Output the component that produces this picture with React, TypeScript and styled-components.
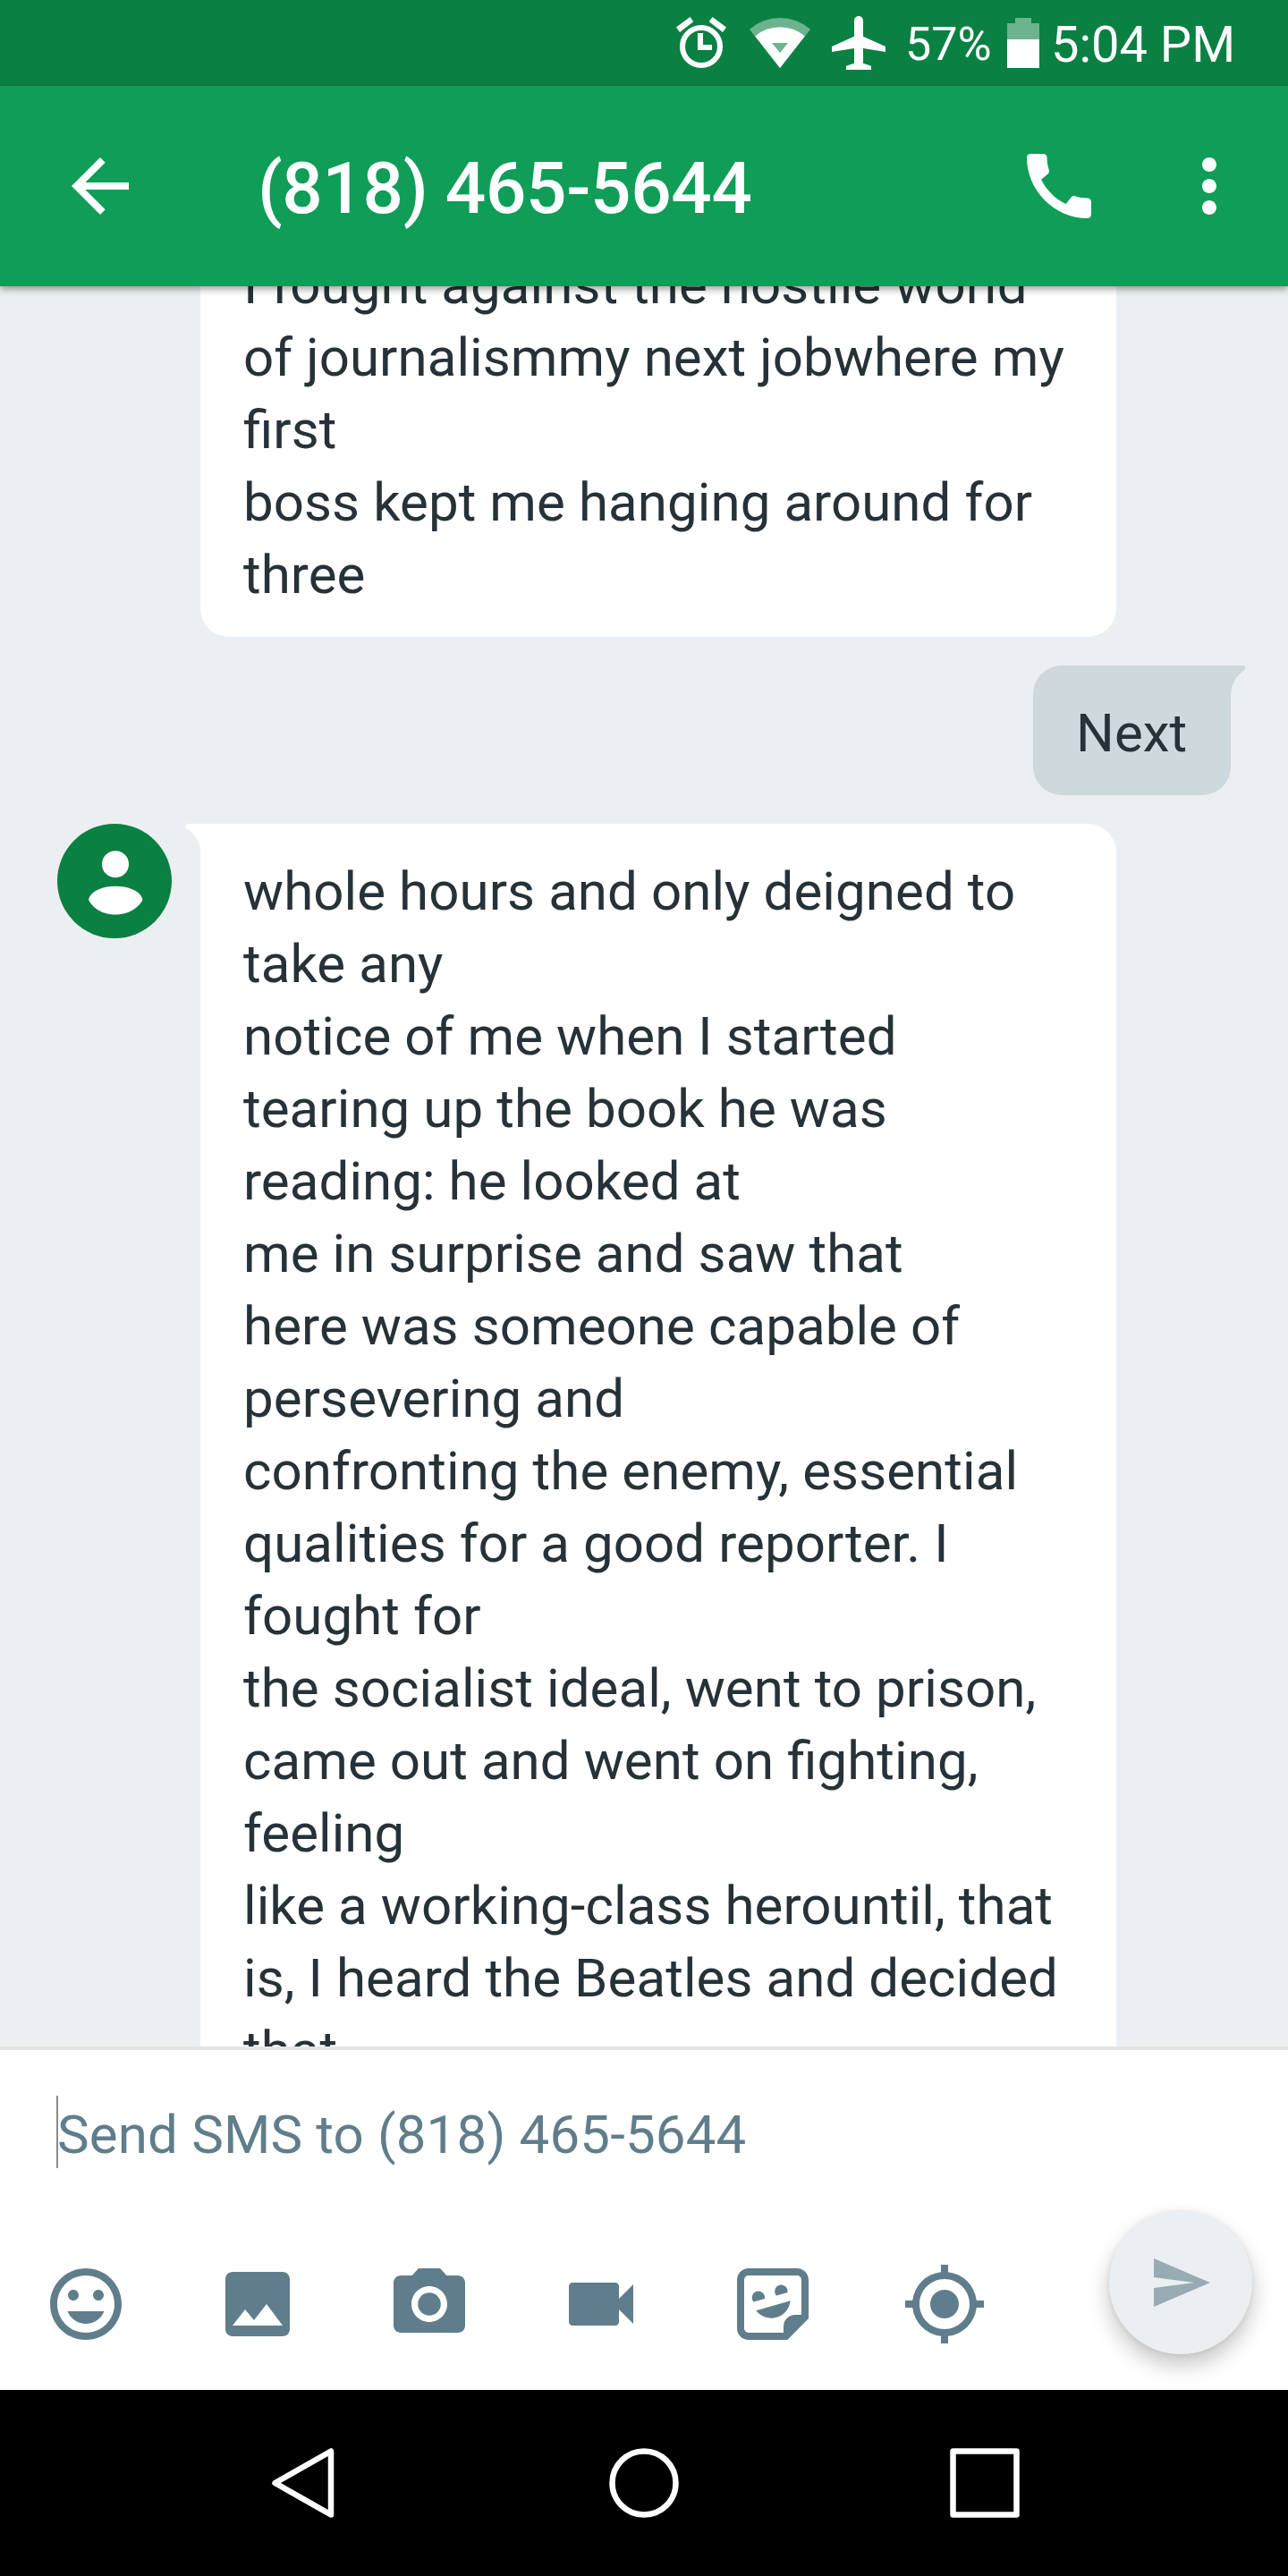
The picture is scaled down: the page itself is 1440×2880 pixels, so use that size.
import React from "react";
import styled, { createGlobalStyle, css } from 'styled-components';
import {
  MdArrowBack,
  MdCall,
  MdMoreVert,
  MdMood,
  MdImage,
  MdPhotoCamera,
  MdVideocam,
  MdGpsFixed,
  MdSend,
} from 'react-icons/md';

const GlobalStyle = createGlobalStyle`
  * {
    box-sizing: border-box;
  }
  body {
    margin: 0;
    background: #000;
    font-family: Roboto, "Noto Sans", sans-serif;
  }
  svg {
    display: block;
    flex: none;
  }
`;

const Screen = styled.div`
  width: 1440px;
  height: 2880px;
  display: flex;
  flex-direction: column;
  overflow: hidden;
`;

/* ---- status bar ---- */

const StatusBar = styled.div`
  height: 96px;
  flex: none;
  display: flex;
  align-items: center;
  justify-content: flex-end;
  padding-right: 60px;
  background: #0b8043;
  color: #fff;
`;

const StatusIcons = styled.div`
  display: flex;
  align-items: center;
  gap: 20px;
  margin-right: 24px;
`;

const Percent = styled.span`
  width: 114px;
  margin-left: 22px;
  font-size: 52px;
  line-height: 60px;
  padding-top: 4px;
  white-space: nowrap;
`;

const Clock = styled.span`
  width: 205px;
  margin-left: 13px;
  font-size: 56px;
  line-height: 66px;
  padding-top: 4px;
  white-space: nowrap;
`;

/* ---- app bar ---- */

const AppBar = styled.header`
  position: relative;
  z-index: 1;
  height: 224px;
  flex: none;
  display: flex;
  align-items: center;
  padding: 0 40px 0 64px;
  background: #0f9d58;
  color: #fff;
  box-shadow: 0 3px 8px rgba(0, 0, 0, 0.4);
`;

const Title = styled.h1`
  flex: 1;
  margin: 0 0 0 128px;
  padding-top: 5px;
  font-size: 80px;
  font-weight: 500;
  line-height: 96px;
  letter-spacing: -0.35px;
  white-space: nowrap;
`;

const BarActions = styled.div`
  display: flex;
  gap: 72px;
`;

/* ---- conversation ---- */

const Chat = styled.main`
  flex: 1;
  min-height: 0;
  overflow: hidden;
  background: #eceff1;
`;

const Messages = styled.div`
  display: flex;
  flex-direction: column;
  gap: 32px;
  margin-top: -77px;
`;

const MessageRow = styled.div<{ $sent?: boolean }>`
  display: flex;
  align-items: flex-start;
  justify-content: ${p => (p.$sent ? 'flex-end' : 'flex-start')};
  padding: 0 64px;
`;

const AvatarSlot = styled.div`
  width: 128px;
  margin-right: 32px;
  flex: none;
`;

const Bubble = styled.div<{ $sent?: boolean; $tail?: boolean }>`
  position: relative;
  min-width: 221px;
  padding: 35px 48px 29px;
  border-radius: 32px;
  color: #263238;
  font-size: 60px;
  line-height: 81px;
  letter-spacing: 0.08px;
  font-feature-settings: "liga" 1;
  white-space: nowrap;
  background: ${p => (p.$sent ? '#cfd8dc' : '#fff')};
  ${p => !p.$sent && css`width: 1024px;`}
  ${p => p.$tail && (p.$sent
    ? css`border-top-right-radius: 0;`
    : css`border-top-left-radius: 0;`)}
`;

const Tail = styled.svg<{ $sent?: boolean }>`
  position: absolute;
  top: 0;
  ${p => (p.$sent ? 'right: -16px;' : 'left: -16px; transform: scaleX(-1);')}
  fill: ${p => (p.$sent ? '#cfd8dc' : '#fff')};
`;

const Line = styled.div``;

/* ---- compose area ---- */

const Compose = styled.footer`
  height: 384px;
  flex: none;
  display: flex;
  justify-content: space-between;
  border-top: 4px solid #e5e5e5;
  background: #fff;
  color: #607d8b;
`;

const ComposeMain = styled.div`
  display: flex;
  flex-direction: column;
`;

const Field = styled.div`
  display: flex;
  height: 81px;
  margin: 51px 0 0 63px;
`;

const Caret = styled.span`
  width: 2px;
  background: #8a8a8a;
`;

const Hint = styled.span`
  font-size: 60px;
  line-height: 81px;
  letter-spacing: 0.17px;
  padding-top: 3px;
  margin-left: -1px;
  white-space: nowrap;
`;

const Attachments = styled.div`
  display: flex;
  gap: 96px;
  margin: 104px 0 0 48px;
`;

const SendButton = styled.div`
  width: 160px;
  height: 160px;
  margin: 180px 40px 0 0;
  border-radius: 50%;
  display: flex;
  align-items: center;
  justify-content: center;
  background: #eceff1;
  color: rgba(96, 125, 139, 0.6);
  box-shadow: 0 12px 24px rgba(0, 0, 0, 0.23), 0 0 6px rgba(0, 0, 0, 0.08);
`;

/* ---- navigation bar ---- */

const NavBar = styled.nav`
  height: 208px;
  flex: none;
  display: flex;
  align-items: center;
  justify-content: center;
  gap: 301px;
  background: #000;
`;

const AlarmIcon = () => (
  <svg width="68" height="68" viewBox="0 0 68 68" fill="#fff">
    <circle cx="34" cy="38" r="21" fill="none" stroke="#fff" strokeWidth="6" />
    <path d="M30 23h6v13h10v6H30z" />
    <path d="M6 16.5L21.5 5l3.8 5.3L10 22z" />
    <path d="M62 16.5L46.5 5l-3.8 5.3L58 22z" />
  </svg>
);

const WifiIcon = () => (
  <svg width="68" height="68" viewBox="0 0 68 68" fill="#fff">
    <path d="M34 62L0 18.7A52 52 0 0 1 68 18.7z" opacity="0.4" />
    <path fillRule="evenodd" d="M34 62L6.2 26.5A42.5 42.5 0 0 1 61.8 26.5zM25 34L34 45L43 34z" />
  </svg>
);

const PlaneIcon = () => (
  <svg width="60" height="60" viewBox="0 0 60 60" fill="#fff">
    <path d="M25 5a5 5 0 0 1 10 0v17.7l25 11.3v6L35 36v16.7l9 3V60H16v-4.3l9-3V36L0 40v-6l25-11.3z" />
  </svg>
);

const BatteryIcon = () => (
  <svg width="36" height="56" viewBox="0 0 36 56" fill="#fff">
    <path d="M9 0h18v6h9v18H0V6h9z" opacity="0.4" />
    <path d="M0 24h36v32H0z" />
  </svg>
);

const Avatar = () => (
  <svg width="128" height="128" viewBox="0 0 128 128">
    <circle cx="64" cy="64" r="64" fill="#0b8043" />
    <circle cx="65" cy="45.2" r="15" fill="#fff" />
    <path
      fill="#fff"
      d="M36 82C40 74 52 69.7 65 69.7S91 74 94.5 82Q96 84.5 94.5 87C88 96 78 101.5 65 101.5S42 96 36 87Q34.5 84.5 36 82z"
    />
  </svg>
);

const StickerIcon = () => (
  <svg width="96" height="96" viewBox="0 0 96 96" fill="currentColor">
    <path
      fillRule="evenodd"
      d="M21 8H75A13 13 0 0 1 88 21V64L64.3 88H21A13 13 0 0 1 8 75V21A13 13 0 0 1 21 8zM21 16A5 5 0 0 0 16 21V75A5 5 0 0 0 21 80H60V73A13 13 0 0 1 73 60H80V21A5 5 0 0 0 75 16z"
    />
    <path d="M26.5 45.5A7.2 7.2 0 1 1 39 42z" />
    <path d="M52 38.5A7.2 7.2 0 1 1 64.5 35z" />
    <path d="M67.7 44.3A21.5 21.5 0 0 1 29.3 55.3z" />
  </svg>
);

const NavIcon = styled.svg`
  width: 80px;
  height: 80px;
  fill: none;
  stroke: #fff;
  stroke-width: 6.5px;
  stroke-linejoin: round;
`;

interface Message {
  sent?: boolean;
  tail?: boolean;
  lines: string[];
}

const messages: Message[] = [
  {
    lines: [
      'I fought against the hostile world',
      'of journalismmy next jobwhere my',
      'first',
      'boss kept me hanging around for',
      'three',
    ],
  },
  { sent: true, tail: true, lines: ['Next'] },
  {
    tail: true,
    lines: [
      'whole hours and only deigned to',
      'take any',
      'notice of me when I started',
      'tearing up the book he was',
      'reading: he looked at',
      'me in surprise and saw that',
      'here was someone capable of',
      'persevering and',
      'confronting the enemy, essential',
      'qualities for a good reporter. I',
      'fought for',
      'the socialist ideal, went to prison,',
      'came out and went on fighting,',
      'feeling',
      'like a working-class herountil, that',
      'is, I heard the Beatles and decided',
      'that',
    ],
  },
];

const App: React.FC = () => {
  return (
    <Screen>
      <GlobalStyle />
      <StatusBar>
        <StatusIcons>
          <AlarmIcon />
          <WifiIcon />
        </StatusIcons>
        <PlaneIcon />
        <Percent>57%</Percent>
        <BatteryIcon />
        <Clock>5:04 PM</Clock>
      </StatusBar>

      <AppBar>
        <MdArrowBack size={96} />
        <Title>(818) 465-5644</Title>
        <BarActions>
          <MdCall size={96} />
          <MdMoreVert size={96} />
        </BarActions>
      </AppBar>

      <Chat>
        <Messages>
          {messages.map((item, i) => (
            <MessageRow key={i} $sent={item.sent}>
              {!item.sent && <AvatarSlot>{item.tail && <Avatar />}</AvatarSlot>}
              <Bubble $sent={item.sent} $tail={item.tail}>
                {item.tail && (
                  <Tail $sent={item.sent} width="16" height="32" viewBox="0 0 16 32">
                    <path d="M0 0H16V5A32 32 0 0 0 0 32z" />
                  </Tail>
                )}
                {item.lines.map(line => (
                  <Line key={line}>{line}</Line>
                ))}
              </Bubble>
            </MessageRow>
          ))}
        </Messages>
      </Chat>

      <Compose>
        <ComposeMain>
          <Field>
            <Caret />
            <Hint>Send SMS to (818) 465-5644</Hint>
          </Field>
          <Attachments>
            <MdMood size={96} />
            <MdImage size={96} />
            <MdPhotoCamera size={96} />
            <MdVideocam size={96} />
            <StickerIcon />
            <MdGpsFixed size={96} />
          </Attachments>
        </ComposeMain>
        <SendButton>
          <MdSend size={72} />
        </SendButton>
      </Compose>

      <NavBar>
        <NavIcon viewBox="0 0 80 80">
          <path d="M71 4.5V75.5L8.5 40z" />
        </NavIcon>
        <NavIcon viewBox="0 0 80 80">
          <circle cx="40" cy="40" r="35.5" />
        </NavIcon>
        <NavIcon viewBox="0 0 80 80">
          <rect x="4.5" y="4.5" width="71" height="71" />
        </NavIcon>
      </NavBar>
    </Screen>
  );
};

export default App;
